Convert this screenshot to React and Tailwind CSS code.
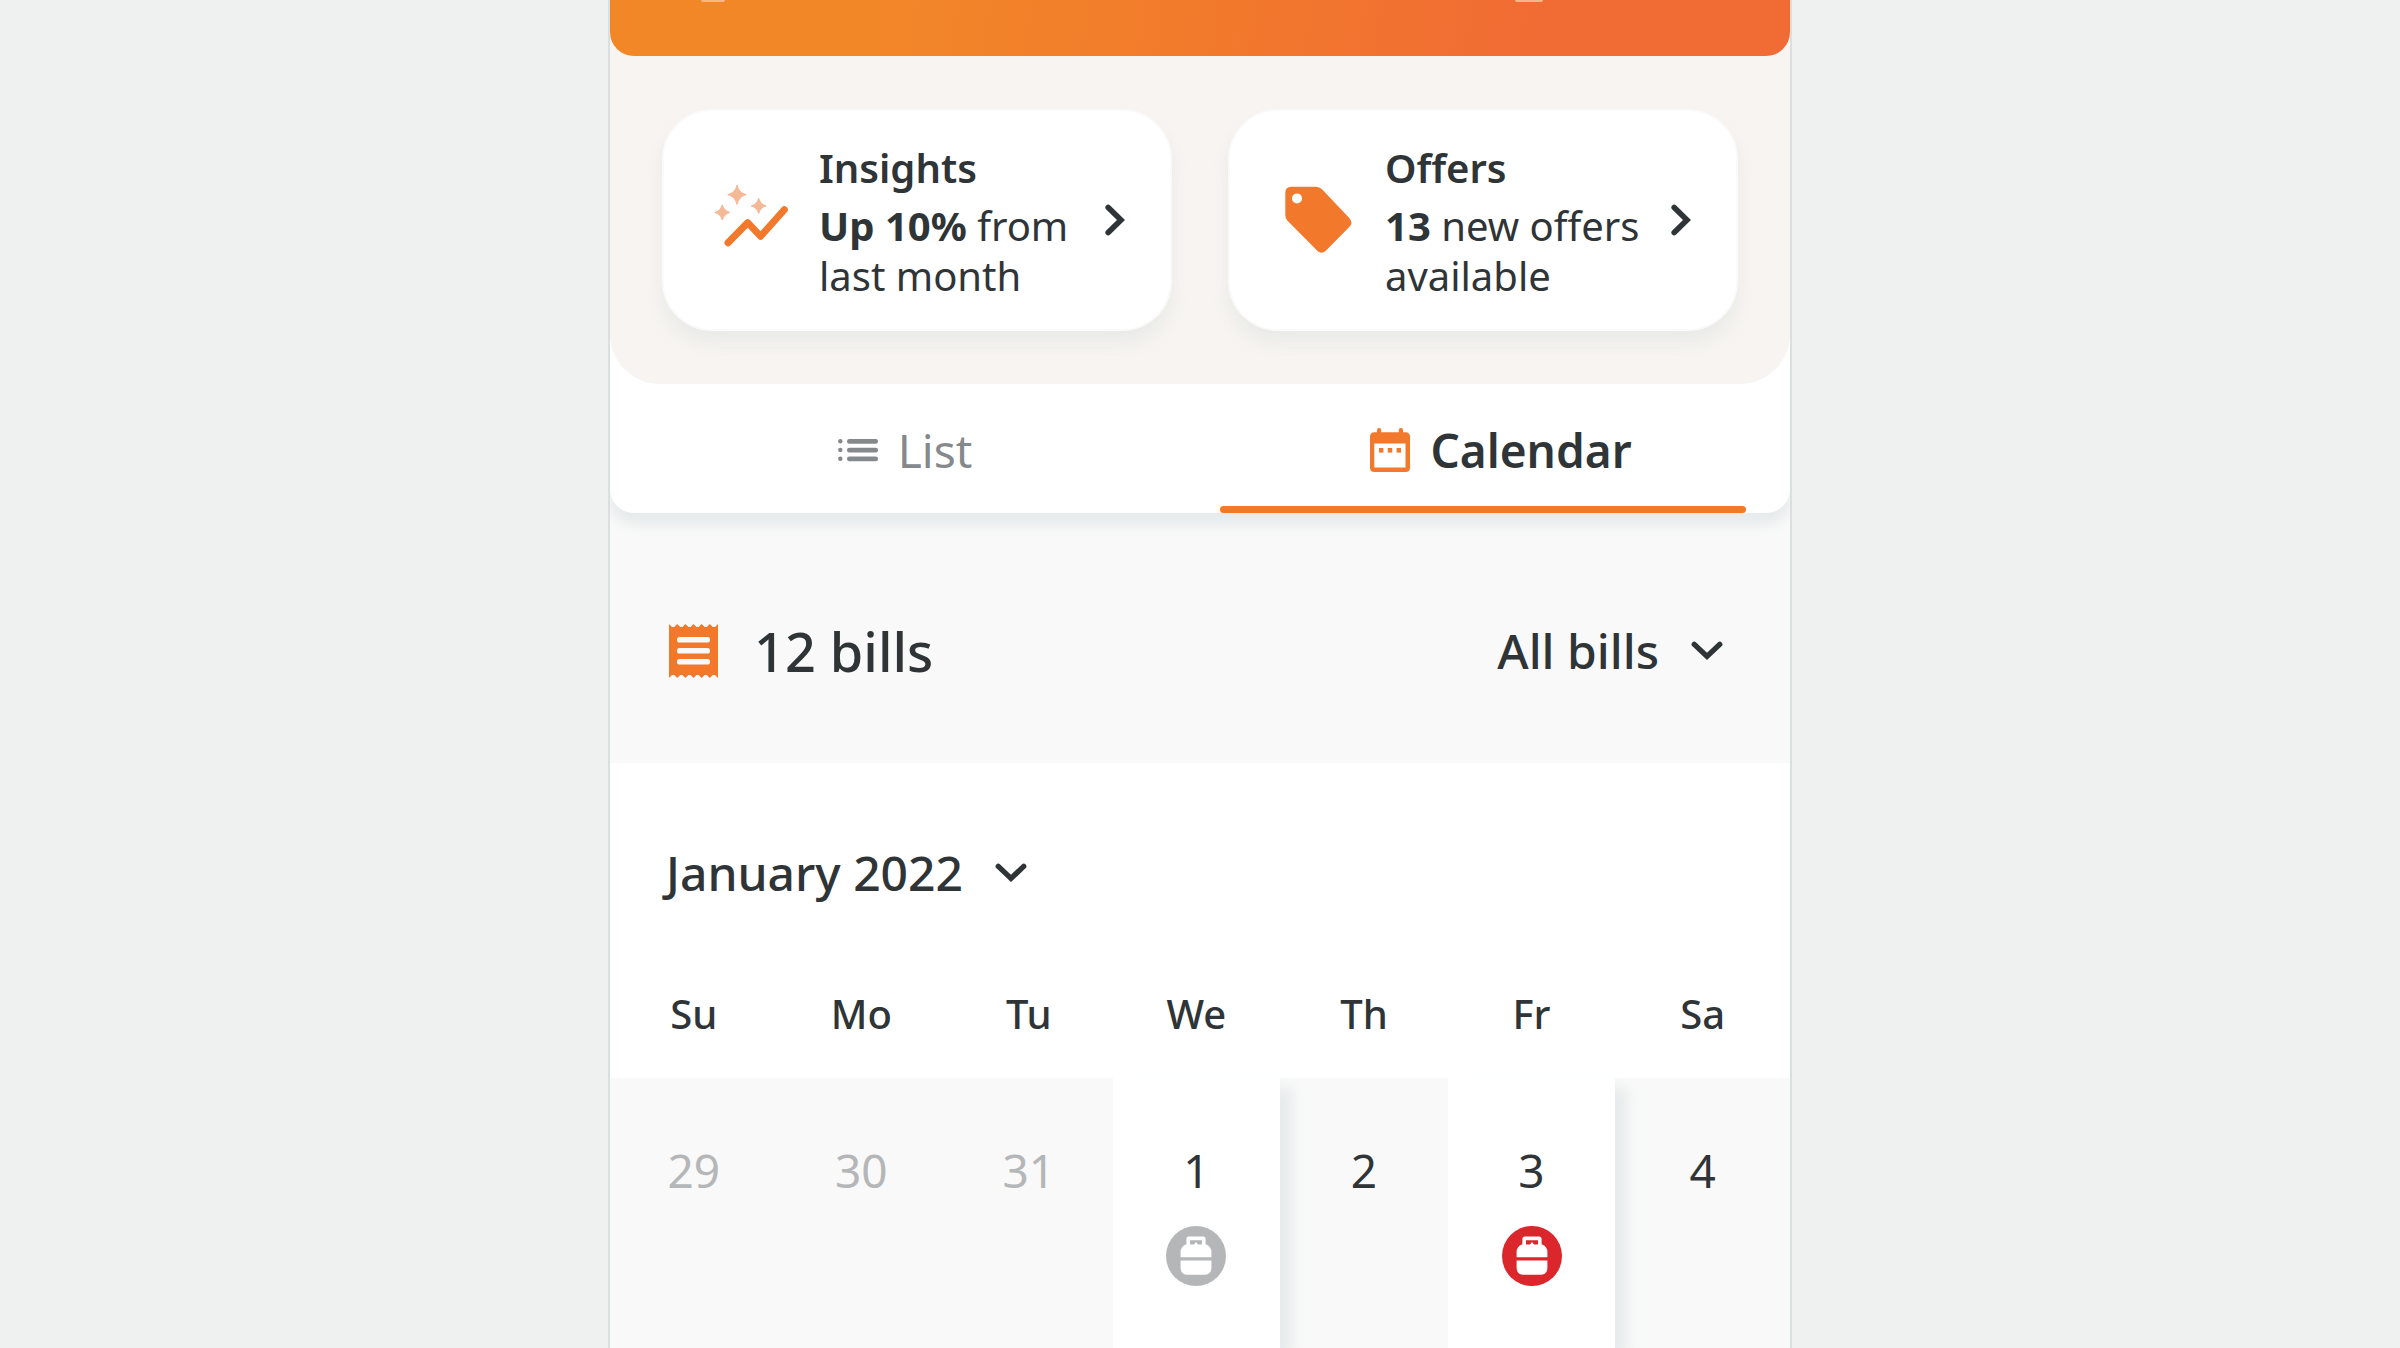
import React, { useState } from "react";

const weekdays = ["Su", "Mo", "Tu", "We", "Th", "Fr", "Sa"];

const days = [
  { day: 29, outside: true },
  { day: 30, outside: true },
  { day: 31, outside: true },
  { day: 1, bill: "paid" },
  { day: 2 },
  { day: 3, bill: "overdue" },
  { day: 4 },
];

const InsightsIcon = () => (
  <svg viewBox="12 10 80 80" className="size-20 shrink-0" fill="none" aria-hidden="true">
    <g fill="#f5b998">
      <path d="M37 15Q38.8 22.9 46.2 24.7Q38.8 26.5 37 34.4Q35.2 26.5 27.8 24.7Q35.2 22.9 37 15Z" stroke="#f5b998" strokeLinejoin="round" />
      <path d="M22.3 34.8Q23.9 40.8 29.8 42.4Q23.9 44 22.3 50Q20.7 44 14.8 42.4Q20.7 40.8 22.3 34.8Z" stroke="#f5b998" strokeLinejoin="round" />
      <path d="M58.7 28.3Q60.3 34.3 66.2 35.9Q60.3 37.5 58.7 43.5Q57.1 37.5 51.2 35.9Q57.1 34.3 58.7 28.3Z" stroke="#f5b998" strokeLinejoin="round" />
    </g>
    <path d="M28 72.7L47.7 52.7L60.7 66.3L84.3 39.7" stroke="#f2792c" strokeWidth="7" strokeLinecap="round" strokeLinejoin="round" />
  </svg>
);

const TagIcon = () => (
  <svg viewBox="8 10 80 80" className="size-20 shrink-0" aria-hidden="true">
    <path
      fill="#f2792c"
      d="M21.3 16.7H46Q49.5 16.7 52 19.2L79.5 48.2Q83.3 52.6 79.5 56.8L55.8 80.7Q51.5 84.7 47.3 80.7L17.3 50.5Q15.3 48.5 15.3 45V22.7Q15.3 16.7 21.3 16.7Z"
    />
    <circle cx="27" cy="28.4" r="5" fill="#fff" />
  </svg>
);

const ListIcon = () => (
  <svg viewBox="0 0 40 24" className="h-6 w-10" fill="#85898b" aria-hidden="true">
    <circle cx="2.3" cy="3.3" r="2.2" />
    <circle cx="2.3" cy="12" r="2.2" />
    <circle cx="2.3" cy="20.7" r="2.2" />
    <rect x="9" y="1" width="31" height="4.8" rx="2.3" />
    <rect x="9" y="9.7" width="31" height="4.8" rx="2.3" />
    <rect x="9" y="18.4" width="31" height="4.8" rx="2.3" />
  </svg>
);

const CalendarIcon = () => (
  <svg viewBox="0 0 40 44" className="h-11 w-10" aria-hidden="true">
    <g fill="#f2792c">
      <rect x="7" y="0" width="4.2" height="8" rx="2" />
      <rect x="28.8" y="0" width="4.2" height="8" rx="2" />
      <path fillRule="evenodd" d="M4.5 4.3H35.5Q40 4.3 40 8.8V39.5Q40 44 35.5 44H4.5Q0 44 0 39.5V8.8Q0 4.3 4.5 4.3ZM4.3 15.4V39.4H35.5V15.4Z" />
      <rect x="9" y="20" width="4.4" height="4.6" />
      <rect x="17.8" y="20" width="4.4" height="4.6" />
      <rect x="26.6" y="20" width="4.4" height="4.6" />
    </g>
  </svg>
);

const ReceiptIcon = () => (
  <svg viewBox="0 0 49 54" className="h-[54px] w-[49px]" aria-hidden="true">
    <path
      fill="#f2792c"
      d="M0 0L3 3H5.2L8.2 0L11.2 3H13.4L16.4 0L19.4 3H21.6L24.5 0L27.4 3H29.6L32.6 0L35.6 3H37.8L40.8 0L43.8 3H46L49 0V54L46 51H43.8L40.8 54L37.8 51H35.6L32.6 54L29.6 51H27.4L24.5 54L21.6 51H19.4L16.4 54L13.4 51H11.2L8.2 54L5.2 51H3L0 54Z"
    />
    <g fill="#f9f9f9">
      <rect x="8" y="13" width="33" height="5.6" rx="2.6" />
      <rect x="8" y="24" width="33" height="5.6" rx="2.6" />
      <rect x="8" y="35" width="33" height="5.6" rx="2.6" />
    </g>
  </svg>
);

const ChevronRight = () => (
  <svg viewBox="0 0 20 32" className="h-8 w-5 shrink-0" fill="none" aria-hidden="true">
    <path d="M3.2 3.5L16 16L3.2 28.5" stroke="#2f3437" strokeWidth="5.6" strokeLinecap="round" strokeLinejoin="miter" />
  </svg>
);

const ChevronDown = () => (
  <svg viewBox="0 0 32 20" className="pointer-events-none h-5 w-8" fill="none" aria-hidden="true">
    <path d="M3.3 3.4L16 15.4L28.7 3.4" stroke="#2f3437" strokeWidth="5.4" strokeLinecap="round" strokeLinejoin="miter" />
  </svg>
);

const GasBill = ({ status }) => (
  <svg viewBox="0 0 60 60" className="mx-auto size-[60px]" role="img" aria-label={`Gas bill, ${status}`}>
    <circle cx="30" cy="30" r="30" fill={status === "paid" ? "#b4b6b8" : "#db262c"} />
    <g fill="#fff">
      <path
        fillRule="evenodd"
        d="M23 10.4H37Q39.6 10.4 39.6 13V18.2Q45.4 20.5 45.4 26V31.2H14.6V26Q14.6 20.5 20.4 18.2V13Q20.4 10.4 23 10.4ZM24 14.2V18.4H28L30 16L32 18.4H36V14.2Z"
      />
      <path d="M14.6 34.6H45.4V41.5Q45.4 48.8 38.4 48.8H21.6Q14.6 48.8 14.6 41.5Z" />
    </g>
  </svg>
);

const SummaryCard = ({ icon, title, highlight, children }) => (
  <button
    type="button"
    className="flex h-[222px] items-center rounded-[50px] border-2 border-[#fafafa] bg-white pr-[45px] pl-12 text-left shadow-[0_12px_16px_rgba(200,213,211,0.28)]"
  >
    {icon}
    <span className="ml-[27px] flex-1 pt-1 text-[40px] leading-[50px]">
      <strong className="mb-2 block font-semibold">{title}</strong>
      <strong className="font-bold">{highlight}</strong> {children}
    </span>
    <ChevronRight />
  </button>
);

const App = () => {
  const [tab, setTab] = useState("calendar");
  const [filter, setFilter] = useState("All bills");
  const [month, setMonth] = useState("January 2022");

  return (
    <div className="min-h-screen bg-[#eff1f1] font-['Noto_Sans',sans-serif] text-[#2f3437]">
      <main className="mx-auto min-h-screen w-full max-w-[1184px] overflow-hidden border-x-2 border-[#dae0df] bg-[#f9f9f9]">
        <div className="relative rounded-b-3xl bg-white shadow-[0_12px_12px_rgba(205,216,214,0.4)]">
          <section className="rounded-b-[50px] bg-[#f7f4f1]">
            <header className="flex h-14 items-start rounded-b-3xl bg-linear-[100deg,#f28728_22%,#f2792c_52%,#f16c34_78%] pr-[247px] pl-[91px]">
              <span className="h-[2px] w-6 rounded-b-full bg-[#f6b787]" />
              <span className="ml-auto h-[2px] w-7 rounded-b-full bg-[#f6b787]" />
            </header>

            <div className="grid grid-cols-2 gap-14 px-[52px] pt-[53px] pb-[53px]">
              <SummaryCard icon={<InsightsIcon />} title="Insights" highlight="Up 10%">
                from <br />
                last month
              </SummaryCard>
              <SummaryCard icon={<TagIcon />} title="Offers" highlight="13">
                new offers <br />
                available
              </SummaryCard>
            </div>
          </section>

          <div role="tablist" className="grid grid-cols-2 text-[46px]">
            <button type="button" role="tab" aria-selected={tab === "list"} onClick={() => setTab("list")}>
              <span className="flex h-[122px] items-center justify-center gap-5 pt-[10px] text-[#85898b]">
                <ListIcon />
                List
              </span>
              <span className="block h-[7px]" />
            </button>
            <button type="button" role="tab" aria-selected={tab === "calendar"} onClick={() => setTab("calendar")}>
              <span className="flex h-[122px] items-center justify-center gap-5 pt-[10px] pl-3 font-semibold">
                <CalendarIcon />
                Calendar
              </span>
              <span className="mr-11 ml-5 block h-[7px] rounded-full bg-[#f2792c]" />
            </button>
          </div>
        </div>

        <section className="flex items-center justify-between pt-[106px] pr-[67px] pb-20 pl-[59px]">
          <h2 className="flex h-16 items-center gap-9 text-[54px] font-medium">
            <ReceiptIcon />
            12 bills
          </h2>
          <div className="flex items-center">
            <select
              aria-label="Filter bills"
              value={filter}
              onChange={(e) => setFilter(e.target.value)}
              className="-mr-8 field-sizing-content appearance-none bg-transparent pr-16 text-[48px] leading-[60px] font-medium"
            >
              <option>All bills</option>
              <option>Paid</option>
              <option>Overdue</option>
            </select>
            <ChevronDown />
          </div>
        </section>

        <section className="bg-white pt-20">
          <div className="flex items-center pb-[45px] pl-12">
            <select
              aria-label="Month"
              value={month}
              onChange={(e) => setMonth(e.target.value)}
              className="-mr-8 field-sizing-content appearance-none bg-transparent pr-16 indent-2 text-[48px] leading-[60px] font-medium"
            >
              <option>January 2022</option>
              <option>February 2022</option>
            </select>
            <ChevronDown />
          </div>

          <table className="w-full table-fixed border-separate border-spacing-0 text-center">
            <thead>
              <tr>
                {weekdays.map((name, i) => (
                  <th key={name} scope="col" className={`h-[130px] px-0 pt-[2px] pb-0 text-[40px] font-medium ${i < 6 ? "w-[14.2%]" : ""}`}>
                    {name}
                  </th>
                ))}
              </tr>
            </thead>
            <tbody>
              <tr>
                {days.map(({ day, outside, bill }) => (
                  <td
                    key={day}
                    className={`h-[270px] px-0 pt-[62px] pb-0 align-top text-[46px] leading-[60px] ${
                      bill ? "relative z-10 bg-white shadow-[12px_10px_12px_rgba(205,216,214,0.4)]" : "bg-[#f9f9f9]"
                    } ${outside ? "text-[#b4b6b8]" : ""}`}
                  >
                    <div className="mb-[26px]">{day}</div>
                    {bill && <GasBill status={bill} />}
                  </td>
                ))}
              </tr>
            </tbody>
          </table>
        </section>
      </main>
    </div>
  );
};

export default App;
